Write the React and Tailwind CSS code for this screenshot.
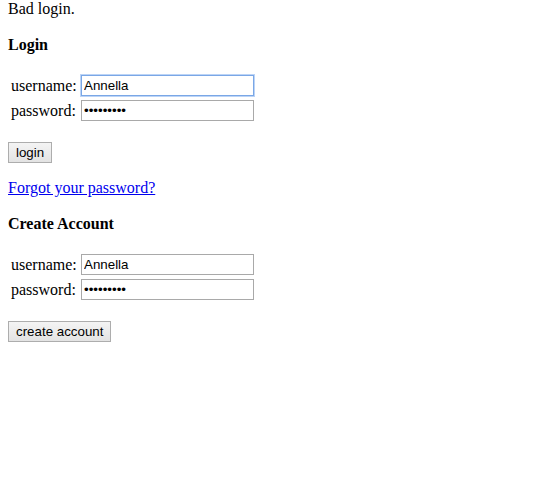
import React from 'react'

const serif = "font-['Liberation_Serif','Times_New_Roman',serif]"
const sans = "font-['Liberation_Sans',Arial,sans-serif]"

function Field({ label, type = 'text', value, focused }) {
    return (
        <div className="flex h-[21px] items-center">
            <span className={`w-[73px] pl-[3px] text-[16px] leading-[18px] ${serif}`}>{label}</span>
            <input
                type={type}
                defaultValue={value}
                className={`h-[21px] w-[173px] border bg-white px-[2px] text-[13.33px] text-black outline-none ${sans} ${
                    focused ? 'border-[#7aa7e6] shadow-[0_0_0_1px_#bcd4f6]' : 'border-[#a9a9a9]'
                }`}
            />
        </div>
    )
}

function Button({ children }) {
    return (
        <button
            type="button"
            className={`h-[21px] border border-[#adadad] bg-gradient-to-b from-[#f4f4f4] to-[#e3e3e3] px-[7px] text-[13.33px] leading-[19px] text-black ${sans}`}
        >
            {children}
        </button>
    )
}

export default function App() {
    return (
        <div className={`min-h-[490px] bg-white pl-[8px] text-black ${serif}`}>
            <div className="h-[18px] text-[16px] leading-[18px]">Bad login.</div>

            <h3 className="mt-[18px] h-[18px] text-[16px] font-bold leading-[18px]">Login</h3>
            <div className="mt-[21px] flex flex-col gap-[4px]">
                <Field label="username:" value="Annella" focused />
                <Field label="password:" type="password" value="123456789" />
            </div>
            <div className="mt-[21px] flex">
                <Button>login</Button>
            </div>

            <div className="mt-[16px] h-[18px] text-[16px] leading-[18px]">
                <a href="#" className="text-[#0000ee] underline">Forgot your password?</a>
            </div>

            <h3 className="mt-[18px] h-[18px] text-[16px] font-bold leading-[18px]">Create Account</h3>
            <div className="mt-[21px] flex flex-col gap-[4px]">
                <Field label="username:" value="Annella" />
                <Field label="password:" type="password" value="123456789" />
            </div>
            <div className="mt-[21px] flex">
                <Button>create account</Button>
            </div>
        </div>
    )
}
